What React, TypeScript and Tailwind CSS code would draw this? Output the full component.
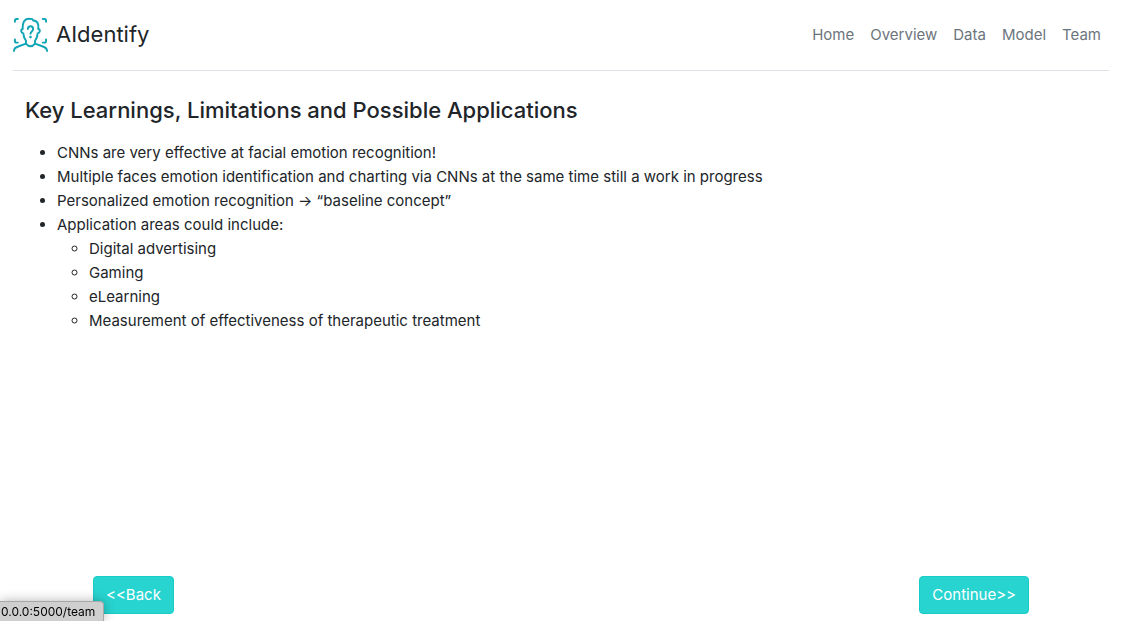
const links = ["Home", "Overview", "Data", "Model", "Team"];

const learnings = [
  "CNNs are very effective at facial emotion recognition!",
  "Multiple faces emotion identification and charting via CNNs at the same time still a work in progress",
  "Personalized emotion recognition → “baseline concept”",
];

const areas = [
  "Digital advertising",
  "Gaming",
  "eLearning",
  "Measurement of effectiveness of therapeutic treatment",
];

function Logo() {
  return (
    <svg
      className="size-[35px] shrink-0"
      viewBox="0 0 108 108"
      fill="none"
      stroke="#12a5b5"
      strokeWidth="6"
      strokeLinecap="round"
      strokeLinejoin="round"
      aria-hidden="true"
    >
      <path d="M6 15V11Q6 6 11 6H15M92 6H97Q102 6 102 11V15M6 69V74Q6 79 11 79H15M92 79H97Q102 79 102 74V69" />
      <path d="M54 6C37 3 29 14 30 37C23 37 24 49 32 51C33 62 36 69 40 73V82Q54 99 68 82V73C72 69 75 62 76 51C84 49 85 37 78 37C80 22 76 11 62 11C61 7 58 5 54 6Z" />
      <path d="M40 82L16 91Q3 95 3 105M68 82L92 91Q105 95 105 105" />
      <path d="M46 37C46 26 62 26 62 37C62 45 54 44 54 52" />
      <circle cx="54" cy="62" r="4" fill="#12a5b5" stroke="none" />
    </svg>
  );
}

const buttonClass =
  "rounded border border-[#17cbc7] bg-[#28d4d0] px-3 py-1.5 text-[15px] leading-6 text-white hover:bg-[#17cbc7]";

export default function App() {
  return (
    <div className="flex min-h-screen flex-col bg-white pt-3 pr-[23px] pb-[7px] pl-[13px] font-['Inter','Liberation_Sans',sans-serif] text-[15px] leading-6 text-[#212529]">
      <header className="flex items-center justify-between border-b border-[#dee2e6] pb-[18px]">
        <a href="#home" className="flex items-center gap-2 pt-1 text-[22px] leading-9">
          <Logo />
          AIdentify
        </a>
        <nav className="flex gap-4 pt-1.5 pr-2 text-[#6c757d]">
          {links.map((link) => (
            <a key={link} href={`#${link.toLowerCase()}`}>
              {link}
            </a>
          ))}
        </nav>
      </header>
      <main className="flex grow flex-col">
        <section className="px-3 pt-[25px]">
          <h1 className="mb-[17px] text-[22px] leading-7 font-medium">
            Key Learnings, Limitations and Possible Applications
          </h1>
          <ul className="list-disc pl-8">
            {learnings.map((item) => (
              <li key={item}>{item}</li>
            ))}
            <li>
              Application areas could include:
              <ul className="list-[circle] pl-8">
                {areas.map((area) => (
                  <li key={area}>{area}</li>
                ))}
              </ul>
            </li>
          </ul>
        </section>
        <div className="mt-auto flex justify-between px-20 pt-8">
          <button type="button" className={buttonClass}>
            &lt;&lt;Back
          </button>
          <button type="button" className={buttonClass}>
            Continue&gt;&gt;
          </button>
        </div>
      </main>
      <div className="fixed bottom-0 left-0 rounded-tr border-t border-r border-[#a8a8a8] bg-[#cfcfcf] pr-2 pl-px text-xs leading-[19px] text-black shadow-[0_0_12px_rgba(0,0,0,0.3)]">
        0.0.0:5000/team
      </div>
    </div>
  );
}
